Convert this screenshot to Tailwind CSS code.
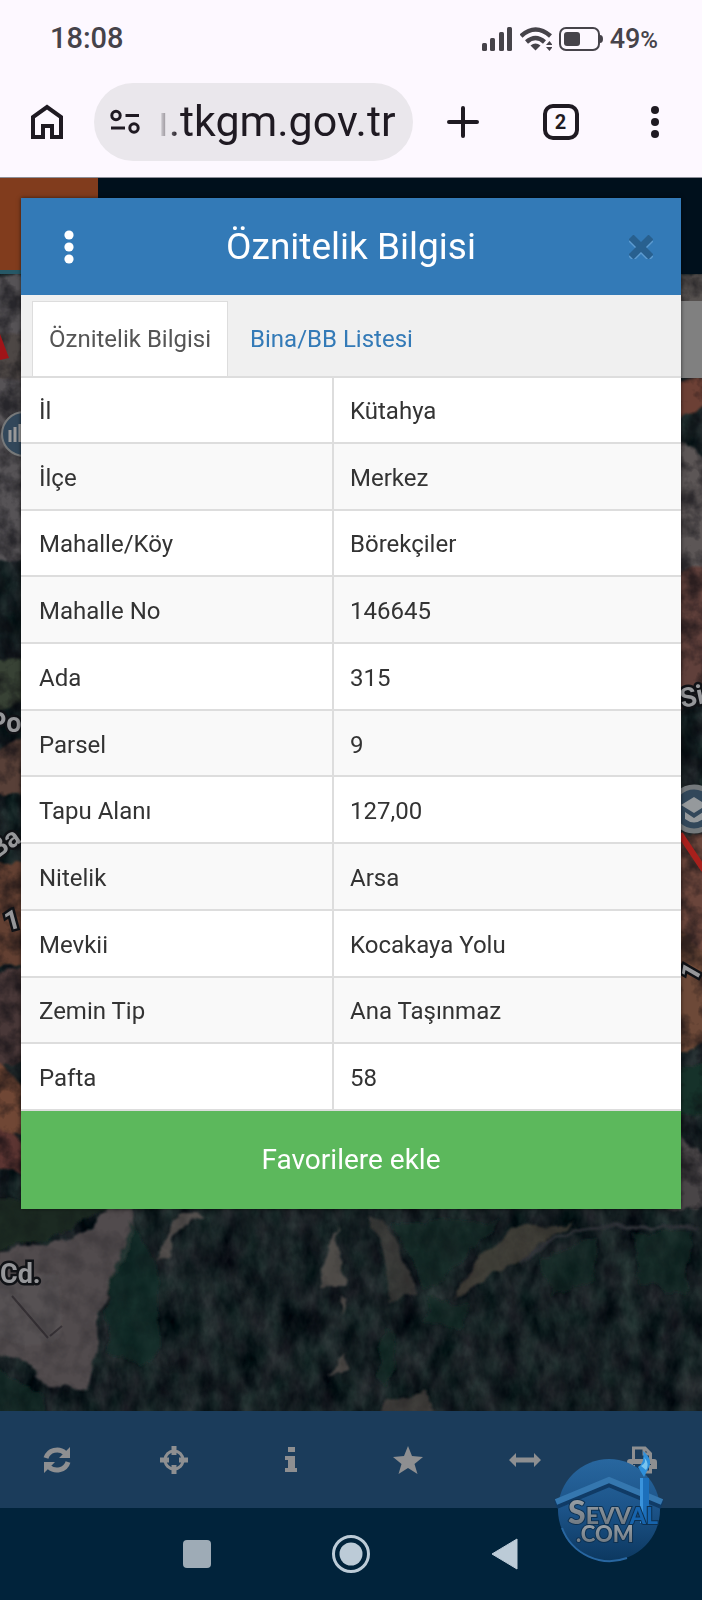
<!DOCTYPE html>
<html lang="tr">

<head>
    <meta charset="UTF-8">
    <meta name="viewport" content="width=device-width, initial-scale=1.0">
    <script src="https://cdn.jsdelivr.net/npm/@tailwindcss/browser@4"></script>
    <title>Öznitelik Bilgisi</title>
</head>

<body class="flex flex-col min-h-screen bg-[#01233b] font-[Roboto,'Noto_Sans',sans-serif]">
    <!-- phone status + browser bar -->
    <header class="bg-[#fdf8ff] text-[#1f1a22] border-b border-[#8d8f98]">
        <div class="flex items-center justify-between h-[78px] pl-[50px] pr-11 text-[#46434a]">
            <span class="text-[29px] font-medium">18:08</span>
            <div class="flex items-center gap-[7px]">
                <svg class="w-8 h-6" viewBox="0 0 32 24" fill="currentColor">
                    <rect x="1" y="16" width="5" height="8" rx="1.5" />
                    <rect x="9" y="11" width="5" height="13" rx="1.5" />
                    <rect x="18" y="5" width="5" height="19" rx="1.5" />
                    <rect x="26" y="0" width="5" height="24" rx="1.5" />
                </svg>
                <svg class="w-8 h-6" viewBox="0 0 32 24" fill="none" stroke="currentColor" stroke-width="4.500">
                    <path d="M1 9Q15.500-4 30.500 9M6.500 15Q15.500 7 24.500 15" />
                    <path d="M10.500 18.500Q15.500 14.500 20.500 18.500L15.500 23.500Z" fill="currentColor" stroke="none" />
                    <path d="M26 18l3.500-4 3 4zM26 20l3.500 4 3-4z" fill="currentColor" stroke="none" />
                </svg>
                <svg class="w-11 h-6" viewBox="0 0 44 24" fill="currentColor">
                    <rect x="1" y="1" width="39" height="22" rx="6" fill="none" stroke="currentColor" stroke-width="2" />
                    <rect x="5" y="5" width="16" height="14" rx="3" />
                    <path d="M41 8q3 0 3 4t-3 4z" />
                </svg>
                <span class="text-[27px] font-medium">49<span class="text-2xl">%</span></span>
            </div>
        </div>
        <div class="flex items-center h-[99px] pb-3 pl-[31px] pr-9">
            <button aria-label="Ana sayfa" class="w-8 shrink-0">
                <svg class="w-8 h-9" viewBox="0 0 32 36" fill="none" stroke="currentColor" stroke-width="4">
                    <path d="M2 33V13L16 3 30 13V33H21V22H12V33Z" />
                </svg>
            </button>
            <div class="flex items-center gap-4 flex-1 min-w-0 h-[78px] ml-[31px] pl-4 pr-3 rounded-full bg-[#eae7ec]">
                <svg class="w-8 h-7 shrink-0" viewBox="0 0 32 28" fill="none" stroke="currentColor" stroke-width="3">
                    <circle cx="6" cy="7.500" r="4.200" />
                    <circle cx="24" cy="20" r="4.200" />
                    <path d="M15.500 7.500H29M1 20H15" />
                </svg>
                <input type="text" aria-label="Adres" value="ı.tkgm.gov.tr"
                    class="flex-1 min-w-0 h-16 text-[43px] bg-transparent focus:outline-none [mask-image:linear-gradient(to_right,transparent,black_20px)]" />
            </div>
            <div class="flex items-center justify-between shrink-0 w-[253px] pl-[34px]">
                <button aria-label="Yeni sekme">
                    <svg class="w-8 h-8" viewBox="0 0 32 32" stroke="currentColor" stroke-width="4" stroke-linecap="round">
                        <path d="M16 2V30M2 16H30" />
                    </svg>
                </button>
                <button aria-label="Sekmeler"
                    class="flex items-center justify-center w-9 h-9 border-4 border-current rounded-[10px] text-xl font-bold">2</button>
                <button aria-label="Menü">
                    <svg class="w-6 h-8" viewBox="0 0 24 32" fill="currentColor">
                        <circle cx="13" cy="4" r="4" />
                        <circle cx="13" cy="16" r="4" />
                        <circle cx="13" cy="28" r="4" />
                    </svg>
                </button>
            </div>
        </div>
    </header>

    <main class="relative isolate px-[21px] pt-5 pb-[202px]">
        <!-- dimmed site header and map behind the dialog -->
        <div class="absolute inset-0 -z-10 flex flex-col overflow-hidden">
            <div class="flex h-24 shrink-0 bg-[#00101c]">
                <div class="w-[98px] bg-[#813c1d] border-b-4 border-[#275866]"></div>
            </div>
            <svg class="flex-1 min-h-0 w-full" viewBox="0 0 702 1137" preserveAspectRatio="xMidYMid slice">
                <defs>
                    <filter id="trees" x="0" y="0" width="100%" height="100%" color-interpolation-filters="sRGB">
                        <feTurbulence type="fractalNoise" baseFrequency="0.05 0.03" numOctaves="4" seed="7" />
                        <feColorMatrix values="0.28 0.02 0 0 -0.06  0.28 0.1 0 0 -0.06  0.26 0.06 0 0 -0.02  0 0 0 0 1" />
                    </filter>
                    <filter id="grain" x="0" y="0" width="100%" height="100%" color-interpolation-filters="sRGB">
                        <feTurbulence type="fractalNoise" baseFrequency="0.05" numOctaves="4" seed="3" />
                        <feColorMatrix values="0 0 0 0 0.04  0 0 0 0 0.04  0 0 0 0 0.06  2.4 0 0 0 -0.95" />
                    </filter>
                    <filter id="rough">
                        <feTurbulence type="fractalNoise" baseFrequency="0.05" numOctaves="3" seed="5" />
                        <feDisplacementMap in="SourceGraphic" scale="14" xChannelSelector="R" yChannelSelector="G" />
                        <feGaussianBlur stdDeviation="1" />
                    </filter>
                </defs>
                <rect width="702" height="1137" fill="#1a2427" filter="url(#trees)" />
                <g filter="url(#rough)">
                    <!-- left strip -->
                    <path d="M-10 0H40V285H-10Z" fill="#565356" />
                    <path d="M-10 60H40V105H-10Z" fill="#4d4645" />
                    <path d="M-10 385H40V420L-10 440Z" fill="#374234" />
                    <path d="M-10 480L40 455V520H-10Z" fill="#594039" />
                    <path d="M-10 590H40V690H-10Z" fill="#643f32" />
                    <path d="M-10 700L40 690V790H-10Z" fill="#4a3938" />
                    <path d="M-10 780L40 830V860H-10Z" fill="#704735" />
                    <path d="M-10 845L40 880V905L-10 890Z" fill="#5b3630" />
                    <!-- right strip -->
                    <path d="M670 0H712V30H670Z" fill="#56514f" />
                    <path d="M670 105H712V125L670 150Z" fill="#6c4136" />
                    <path d="M670 160L712 190V310H670Z" fill="#5b5656" />
                    <path d="M670 300L712 290V420L670 440Z" fill="#61413a" />
                    <path d="M670 560H712V680L670 690Z" fill="#6a443a" />
                    <path d="M670 640L712 690V770L670 780Z" fill="#6d4937" />
                    <path d="M670 790H712V840H670Z" fill="#183229" />
                    <path d="M670 850L712 890V935H670Z" fill="#4a4547" />
                </g>
                <rect width="702" height="935" filter="url(#grain)" opacity="0.5" />
                <g filter="url(#rough)">
                    <!-- square and roads -->
                    <path d="M-20 925H120L50 965L-20 980Z" fill="#1b2b23" />
                    <path d="M112 925H140L124 985 110 1015 97 1040 98 1075 90 1116 48 1112 28 1090-20 1075V980L50 970 90 955Z" fill="#514c4e" />
                    <path d="M-20 1000L60 1000 62 1062 40 1072-20 1062Z" fill="#575152" />
                    <path d="M178 940H205L172 960 170 985 156 987Z" fill="#534f4d" />
                    <path d="M130 945L156 990 160 1075 144 1095 108 1075 104 1035Z" fill="#15302a" opacity="0.7" />
                    <path d="M337 955L345 1012 318 1012M344 1080L351 1096 330 1100M340 1025L347 1028 342 1042Z" fill="#5d5653" opacity="0.8" />
                    <path d="M372 940L386 945 416 1018 390 1026 384 985Z" fill="#47433e" opacity="0.7" />
                    <path d="M454 1024L479 980 519 955 574 948 514 990 482 1008Z" fill="#4e463f" opacity="0.75" />
                    <path d="M520 988Q560 960 590 952H700" fill="none" stroke="#33363a" stroke-width="4" />
                    <path d="M385 1128L425 1118 440 1145H380Z" fill="#48413e" opacity="0.8" />
                    <g fill="#14302b" opacity="0.6">
                        <path d="M384 1055L396 1065 390 1115 376 1105Z" />
                        <path d="M392 950L500 945 450 1000 425 1015Z" />
                        <path d="M540 985L600 965 590 1010 550 1020Z" />
                        <path d="M634 960L690 955 685 1020 640 1010Z" />
                        <path d="M430 1025L465 1030 460 1055 425 1050Z" />
                        <path d="M-20 1085L40 1118 50 1145H-20Z" />
                    </g>
                </g>
                <path d="M12 1022L48 1064M50 1062L62 1052" stroke="#383337" stroke-width="2" fill="none" />
                <rect width="702" height="1137" filter="url(#grain)" opacity="0.2" />
                <path d="M0 60L9 84 0 86Z" fill="#a01418" />
                <path d="M680 560L704 596" stroke="#a8201c" stroke-width="6" />
                <rect x="676" y="27" width="26" height="77" fill="#808080" />
                <g fill="#32475a" stroke="#77797a" stroke-width="2">
                    <circle cx="24" cy="160" r="22" />
                    <circle cx="694" cy="535" r="22" stroke-width="5" stroke="#74797c" />
                </g>
                <path d="M10 156v12M15 153v15M20 150v18" stroke="#999" stroke-width="3" />
                <path d="M681 531l13-8 13 8-13 8zM685 538v7q9 7 18 0v-7l-9 6z" fill="#95999c" />
                <g fill="#96979a" stroke="#101216" stroke-width="5" paint-order="stroke" font-family="Roboto, sans-serif" font-weight="700" font-size="27">
                    <text x="0" y="1009">Cd.</text>
                    <text x="-11" y="458">Po</text>
                    <text x="-4" y="583" transform="rotate(-35 0 583)">Ba</text>
                    <text x="7" y="657" transform="rotate(-15 7 657)">1</text>
                    <text x="682" y="434" transform="rotate(-12 682 434)">Si</text>
                    <text x="692" y="704" transform="rotate(-60 698 704)">1</text>
                </g>
            </svg>
        </div>

        <section class="bg-white shadow-[0_0_4px_rgba(0,0,0,0.6)]">
            <div class="flex items-center justify-between h-[97px] pl-9 pr-7 bg-[#337ab7] text-white">
                <button aria-label="Seçenekler">
                    <svg class="w-6 h-9" viewBox="0 0 24 36" fill="currentColor">
                        <circle cx="12" cy="6" r="4.600" />
                        <circle cx="12" cy="18" r="4.600" />
                        <circle cx="12" cy="30" r="4.600" />
                    </svg>
                </button>
                <h1 class="pr-2 text-[37px]">Öznitelik Bilgisi</h1>
                <button aria-label="Kapat">
                    <svg class="w-6 h-6" viewBox="0 0 24 24" stroke-width="7">
                        <path d="M2 4L22 24M22 4L2 24" stroke="#5c9bd0" />
                        <path d="M2 2L22 22M22 2L2 22" stroke="#28608f" />
                    </svg>
                </button>
            </div>
            <nav class="flex h-[83px] pt-[6px] pl-[11px] bg-[#f0f0f0] border-b-2 border-[#ddd]">
                <a href="#" class="flex items-center h-[75px] px-4 bg-white border border-b-0 border-[#ddd] text-2xl text-[#555]">Öznitelik Bilgisi</a>
                <a href="#" class="flex items-center h-[75px] px-[22px] text-2xl text-[#337ab7]">Bina/BB Listesi</a>
            </nav>
            <table class="w-full h-[733px] border-collapse text-2xl text-[#333] text-left">
                <tbody class="[&_th]:w-[312px] [&_th]:pt-[3px] [&_td]:pt-[3px] [&_th]:pl-[18px] [&_th]:font-normal [&_th]:border-r-2 [&_th]:border-[#ddd] [&_td]:pl-4 [&_tr]:border-b-2 [&_tr]:border-[#ddd] [&_tr:nth-child(even)]:bg-[#f9f9f9]">
                    <tr><th scope="row">İl</th><td>Kütahya</td></tr>
                    <tr><th scope="row">İlçe</th><td>Merkez</td></tr>
                    <tr><th scope="row">Mahalle/Köy</th><td>Börekçiler</td></tr>
                    <tr><th scope="row">Mahalle No</th><td>146645</td></tr>
                    <tr><th scope="row">Ada</th><td>315</td></tr>
                    <tr><th scope="row">Parsel</th><td>9</td></tr>
                    <tr><th scope="row">Tapu Alanı</th><td>127,00</td></tr>
                    <tr><th scope="row">Nitelik</th><td>Arsa</td></tr>
                    <tr><th scope="row">Mevkii</th><td>Kocakaya Yolu</td></tr>
                    <tr><th scope="row">Zemin Tip</th><td>Ana Taşınmaz</td></tr>
                    <tr><th scope="row">Pafta</th><td>58</td></tr>
                </tbody>
            </table>
            <button class="block w-full h-[98px] bg-[#5cb85c] text-[28px] text-white">Favorilere ekle</button>
        </section>
    </main>

    <footer class="relative">
        <div class="flex items-center h-[97px] bg-[#1b3c5b] text-[#8e8f91] [&>button]:flex-1 [&>button]:pr-1 [&_svg]:mx-auto">
            <button aria-label="Yenile">
                <svg class="w-7 h-7" viewBox="0 0 28 28" fill="none" stroke="currentColor" stroke-width="5">
                    <path d="M3 12A11.500 11 0 0 1 22 7M25 16A11.500 11 0 0 1 6 21" />
                    <path d="M27 1V12H16ZM1 27V16H12Z" fill="currentColor" stroke="none" />
                </svg>
            </button>
            <button aria-label="Konum">
                <svg class="w-7 h-7" viewBox="0 0 28 28" fill="none" stroke="currentColor" stroke-width="3">
                    <circle cx="14" cy="14" r="9" />
                    <path d="M14 0V9M14 19V28M0 14H9M19 14H28" stroke-width="5" />
                </svg>
            </button>
            <button aria-label="Bilgi">
                <svg class="w-7 h-7" viewBox="0 0 28 28" fill="currentColor">
                    <path d="M11 1h7v5h-7zM8 10h10v12h2v4H8v-4h3v-8H8z" />
                </svg>
            </button>
            <button aria-label="Favoriler">
                <svg class="w-[30px] h-7" viewBox="0 0 30 28" fill="currentColor">
                    <path d="M15 0l4 10 11 1-8.500 7 3 10-9.500-6-9.500 6 3-10L0 11l11-1z" />
                </svg>
            </button>
            <button aria-label="Ölçüm">
                <svg class="w-8 h-7" viewBox="0 0 32 28" fill="currentColor">
                    <path d="M0 14l7-7v4.500h18V7l7 7-7 7v-4.500H7V21z" />
                </svg>
            </button>
            <button aria-label="Yazdır">
                <svg class="w-[30px] h-7" viewBox="0 0 30 28" fill="none" stroke="currentColor" stroke-width="3">
                    <path d="M6.500 14V2H18L23.500 7.500V14M17 2V8H23" />
                    <path d="M3 13H27Q30 13 30 16V23H24V18H6V23H0V16Q0 13 3 13Z" fill="currentColor" stroke="none" />
                    <path d="M6.500 19V26H23.500V19" />
                </svg>
            </button>
        </div>
        <div class="flex items-center justify-center gap-[120px] h-[92px] text-[#bccbd7]">
            <button aria-label="Son uygulamalar" class="w-7 h-7 rounded bg-[#9eabb6]"></button>
            <button aria-label="Ana ekran">
                <svg class="w-10 h-10" viewBox="0 0 40 40" fill="currentColor">
                    <circle cx="20" cy="20" r="17.500" fill="none" stroke="currentColor" stroke-width="3" />
                    <circle cx="20" cy="20" r="11.500" />
                </svg>
            </button>
            <button aria-label="Geri">
                <svg class="w-7 h-8" viewBox="0 0 28 32" fill="currentColor">
                    <path d="M1 16L26 1V31Z" stroke="currentColor" stroke-width="1" stroke-linejoin="round" />
                </svg>
            </button>
        </div>
        <!-- watermark -->
        <svg class="absolute right-[36px] bottom-[37px] w-[114px] h-[112px]" viewBox="0 0 114 112">
            <defs>
                <linearGradient id="disc" x1="0" y1="0" x2="0" y2="1">
                    <stop offset="0" stop-color="#28679f" />
                    <stop offset="0.5" stop-color="#1c5388" />
                    <stop offset="1" stop-color="#0c3860" />
                </linearGradient>
                <linearGradient id="steel" x1="0" y1="0" x2="0" y2="1">
                    <stop offset="0" stop-color="#a4aaaf" />
                    <stop offset="1" stop-color="#65707a" />
                </linearGradient>
            </defs>
            <circle cx="57" cy="59" r="51" fill="url(#disc)" />
            <path d="M10 77A51 51 0 0 0 75 107" fill="none" stroke="#2866a0" stroke-width="2" />
            <path d="M4 54L57 32 110 54" fill="none" stroke="#103b66" stroke-width="8" />
            <path d="M4 51L57 29 110 51" fill="none" stroke="#3577af" stroke-width="6" />
            <path d="M88 27H97V72H88Z" fill="#1c6fbb" />
            <path d="M88 27H91V72H88Z" fill="#3a93dc" />
            <path d="M86 16Q93 12 91 0 102 9 96 18L92 26Z" fill="#2e8fda" />
            <path d="M89 15Q95 12 92 6 98 13 94 19Z" fill="#79c4ef" />
            <g font-family="Lato, sans-serif" font-weight="900" stroke="#0d3152" stroke-width="2" paint-order="stroke" fill="url(#steel)">
                <text x="16" y="73" font-size="23"><tspan font-size="32">S</tspan>EVV<tspan fill="#1764ad">AL</tspan></text>
                <text x="24" y="91" font-size="22">.COM</text>
            </g>
        </svg>
    </footer>
</body>

</html>
